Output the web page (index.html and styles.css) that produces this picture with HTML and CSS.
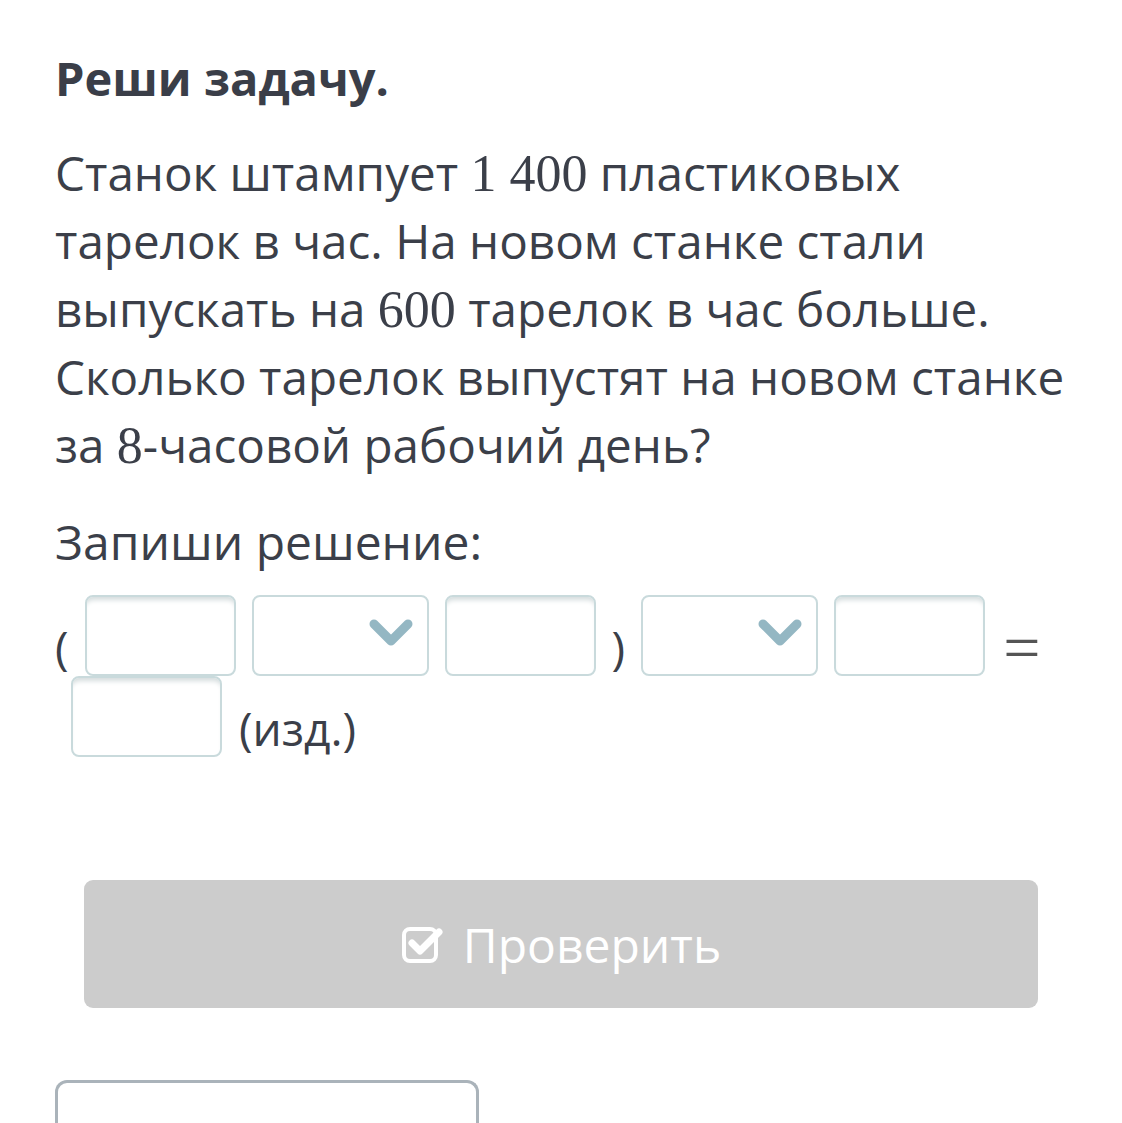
FILE: index.html
```html
<!DOCTYPE html>
<html lang="ru">
<head>
    <meta charset="UTF-8">
    <meta name="viewport" content="width=device-width, initial-scale=1.0">
    <title>Реши задачу</title>
    <link rel="stylesheet" href="styles.css">
</head>
<body>
    <div class="task">
        <h1>Реши задачу.</h1>
        <p class="question">Станок штампует <span class="num">1 400</span> пластиковых тарелок в час. На новом станке стали выпускать на <span class="num">600</span> тарелок в час больше. Сколько тарелок выпустят на новом станке за <span class="num">8</span>-часовой рабочий день?</p>
        <p class="prompt">Запиши решение:</p>

        <div class="answer">
            <span class="sym paren">(</span>
            <div class="field"></div>
            <div class="select">
                <svg class="chevron" viewBox="0 0 46 30" width="46" height="30"><path d="M6 6 L23 23 L40 6" fill="none" stroke="#94b7c3" stroke-width="9" stroke-linecap="round" stroke-linejoin="round"/></svg>
            </div>
            <div class="field"></div>
            <span class="sym">)</span>
            <div class="select">
                <svg class="chevron" viewBox="0 0 46 30" width="46" height="30"><path d="M6 6 L23 23 L40 6" fill="none" stroke="#94b7c3" stroke-width="9" stroke-linecap="round" stroke-linejoin="round"/></svg>
            </div>
            <div class="field"></div>
            <span class="sym eq">=</span>
            <div class="field"></div>
            <span class="sym unit">(изд.)</span>
        </div>

        <button class="check-btn" type="button" disabled>
            <svg viewBox="0 0 46 40" width="46" height="40"><rect x="3" y="5" width="32" height="32" rx="6" fill="none" stroke="#fff" stroke-width="4"/><path d="M11 19 L19 27 L38 8" fill="none" stroke="#fff" stroke-width="7" stroke-linecap="round" stroke-linejoin="round"/></svg>
            Проверить
        </button>

        <div class="next-box"></div>
    </div>
</body>
</html>
```

FILE: styles.css
```css
body {
    margin: 0;
    background: #fff;
    font-family: "Open Sans", sans-serif;
    color: #3b3f49;
}
.task {
    width: 1015px;
    padding: 48px 0 0 55px;
}
h1 {
    margin: 0;
    font-size: 47px;
    line-height: 60px;
    font-weight: 700;
    color: #3a3e48;
}
.question {
    margin: 31px 0 0;
    font-size: 47.6px;
    line-height: 68px;
}
.num {
    font-family: "Liberation Serif", serif;
    font-size: 52px;
    line-height: 1;
}
.prompt {
    margin: 29px 0 0;
    font-size: 48px;
    line-height: 68px;
}
.answer {
    display: flex;
    flex-wrap: wrap;
    align-items: center;
    margin-top: 19px;
    width: 1010px;
}
.sym {
    font-size: 46px;
    line-height: 57px;
    margin-left: 16px;
    padding-top: 24px;
}
.paren {
    margin-left: 0;
}
.eq {
    font-family: "Liberation Serif", serif;
    font-size: 66px;
    color: #555;
    margin-left: 18px;
}
.unit {
    margin-left: 17px;
}
.field, .select {
    box-sizing: border-box;
    height: 81px;
    border: 2px solid #c9dadc;
    border-radius: 8px;
    margin-left: 16px;
}
.field {
    width: 151px;
    box-shadow: inset 0 6px 5px -3px #d4dcdd;
}
.select {
    width: 177px;
    display: flex;
    align-items: center;
    justify-content: flex-end;
    padding-right: 13px;
}
.chevron {
    margin-top: -6px;
}
.check-btn {
    display: flex;
    align-items: center;
    justify-content: center;
    gap: 16px;
    width: 954px;
    height: 128px;
    margin: 123px 0 0 29px;
    border: none;
    border-radius: 9px;
    background: #cccccc;
    color: #fff;
    font-family: "Open Sans", sans-serif;
    font-size: 48px;
}
.next-box {
    width: 418px;
    height: 60px;
    margin-top: 72px;
    border: 3px solid #aab3ba;
    border-bottom: none;
    border-radius: 12px 12px 0 0;
}
```
